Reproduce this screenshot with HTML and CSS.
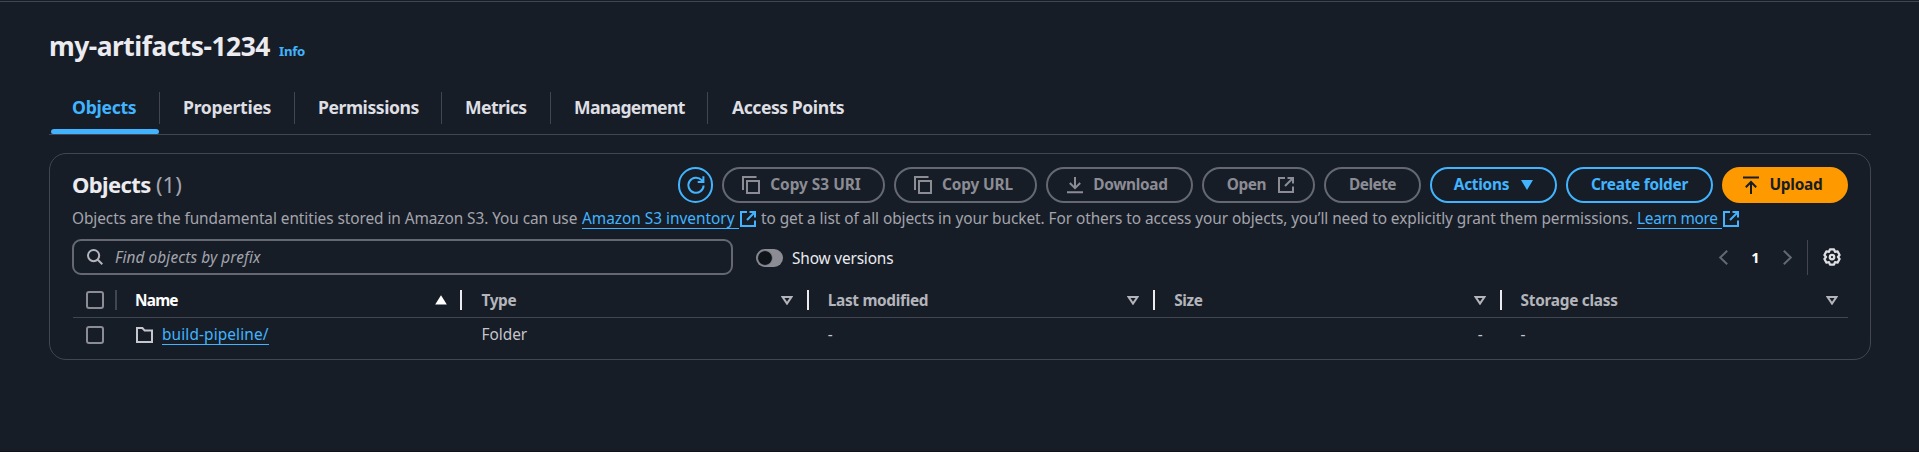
FILE: index.html
```
<!DOCTYPE html>
<html lang="en">
<head>
<meta charset="utf-8">
<title>my-artifacts-1234</title>
<link rel="stylesheet" href="styles.css">
</head>
<body>
<svg width="0" height="0" class="defs">
  <symbol id="copy" viewBox="0 0 18 18"><path d="M1 14V1H14.5M5 5H17V17H5Z"/></symbol>
  <symbol id="external" viewBox="0 0 16 16"><path d="M7 1H1v14h14V9.5M9.5 1H15v5.5M15 1L7 9"/></symbol>
  <symbol id="sort" viewBox="0 0 12 9"><path d="M1.6 1h8.8L6 7.6z"/></symbol>
</svg>
<main class="page">
  <header class="title-row"><h1>my-artifacts-1234</h1><a class="info">Info</a></header>
  <nav class="tabs">
    <a class="tab active t1">Objects</a><a class="tab t2">Properties</a><a class="tab t3">Permissions</a><a class="tab t4">Metrics</a><a class="tab t5">Management</a><a class="tab t6">Access Points</a>
  </nav>
  <section class="card">
    <div class="card-head">
      <h2>Objects</h2><span class="count">(1)</span>
      <div class="buttons">
        <button class="btn refresh"><svg class="icon" viewBox="0 0 18 18"><path d="M16.6 9.5A7.6 7.6 0 1 1 14.7 4.2L16 5.6M16.4 .3V6H10.7"/></svg></button>
        <button class="btn off lead copy-uri"><svg class="icon copy"><use href="#copy"/></svg><span>Copy S3 URI</span></button>
        <button class="btn off lead copy-url"><svg class="icon copy"><use href="#copy"/></svg><span>Copy URL</span></button>
        <button class="btn off lead download"><svg class="icon" viewBox="0 0 16 18"><path d="M8 1v11M2.8 7L8 12.2 13.2 7M0 16.2h16"/></svg><span>Download</span></button>
        <button class="btn off open"><span>Open</span><svg class="icon"><use href="#external"/></svg></button>
        <button class="btn off delete"><span>Delete</span></button>
        <button class="btn actions"><span>Actions</span><svg class="caret" viewBox="0 0 12 10"><path d="M0 0h12L6 10z"/></svg></button>
        <button class="btn create"><span>Create folder</span></button>
        <button class="btn primary lead upload"><svg class="icon" viewBox="0 0 16 18"><path d="M0 1.5h16M8 18V6M2.8 11.2L8 6l5.2 5.2"/></svg><span>Upload</span></button>
      </div>
    </div>
    <p class="desc"><span class="d1">Objects are the fundamental entities stored in Amazon S3. You can use</span><a class="link inv">Amazon S3 inventory</a><svg class="icon ext"><use href="#external"/></svg><span class="d2">to get a list of all objects in your bucket. For others to access your objects, you’ll need to explicitly grant them permissions.</span><a class="link learn">Learn more</a><svg class="icon ext"><use href="#external"/></svg></p>
    <div class="tools">
      <div class="search"><svg class="icon" viewBox="0 0 16 16"><circle cx="6.6" cy="6.6" r="5.6"/><path d="M10.5 10.5L15.3 15.3"/></svg><span>Find objects by prefix</span></div>
      <span class="toggle"></span><span class="toggle-label">Show versions</span>
      <div class="pager">
        <svg class="chev" viewBox="0 0 9 15"><path d="M8.2 .8L1.2 7.5l7 6.7"/></svg><b>1</b><svg class="chev" viewBox="0 0 9 15"><path d="M.8 .8l7 6.7-7 6.7"/></svg>
        <i></i>
        <svg class="gear" viewBox="0 0 16 16"><path d="M6.2 1.2H9.8L10.65 3.4 12.95 3.05 14.75 6.2 13.3 8 14.75 9.8 12.95 12.95 10.65 12.6 9.8 14.8H6.2L5.35 12.6 3.05 12.95 1.25 9.8 2.7 8 1.25 6.2 3.05 3.05 5.35 3.4Z"/><circle cx="8" cy="8" r="2"/></svg>
      </div>
    </div>
    <div class="row head">
      <div class="check-cell"><span class="check"></span></div>
      <div class="cell name sorted"><span>Name</span><svg class="tri up" viewBox="0 0 12 10"><path d="M6 .3L11.8 9.6H.2z"/></svg></div>
      <div class="cell"><span>Type</span><svg class="tri"><use href="#sort"/></svg></div>
      <div class="cell"><span>Last modified</span><svg class="tri"><use href="#sort"/></svg></div>
      <div class="cell"><span>Size</span><svg class="tri"><use href="#sort"/></svg></div>
      <div class="cell"><span class="storage">Storage class</span><svg class="tri"><use href="#sort"/></svg></div>
    </div>
    <div class="row body">
      <div class="check-cell"><span class="check"></span></div>
      <div class="cell"><svg class="folder" viewBox="0 0 17 16"><path d="M1 15V1h5.4l2.3 2.6H16V15z"/></svg><a class="link obj">build-pipeline/</a></div>
      <div class="cell">Folder</div>
      <div class="cell">-</div>
      <div class="cell size">-</div>
      <div class="cell">-</div>
    </div>
  </section>
</main>
</body>
</html>
```
FILE: styles.css
```
* { box-sizing: border-box; }
body { margin: 0; background: #161d26; color: #c6c6cd; font: 15.4px/22px "Noto Sans", "Open Sans", sans-serif; overflow: hidden; }
h1, h2, p { margin: 0; }
svg { fill: none; stroke: currentColor; stroke-width: 2; flex: none; display: block; overflow: visible; }
.defs { position: absolute; }
.page { height: 452px; padding: 27px 48px 0 49px; border-bottom: 1px solid #0f141a; background: linear-gradient(#424650, #424650) 0 1px / 100% 1px no-repeat; }
.title-row { display: flex; align-items: baseline; height: 65px; padding-top: 3px; }
h1 { width: 230px; font-size: 26.4px; line-height: 33px; letter-spacing: -.5px; color: #ebebf0; white-space: nowrap; }
.info { font-size: 13.2px; font-weight: 700; letter-spacing: -.25px; color: #42b4ff; }
.tabs { display: flex; height: 43px; border-bottom: 1px solid #424650; color: #dedee3; font-size: 17.6px; font-weight: 700; }
.tab { height: 32px; padding-left: 23px; line-height: 31px; border-right: 1px solid #424650; white-space: nowrap; }
.tab.active { height: 43px; color: #42b4ff; border: 0; background: linear-gradient(#424650, #424650) 110px 0 / 1px 32px no-repeat; }
.tab.active::after { content: ""; display: block; width: 108px; height: 5px; margin: 6px 0 0 -21px; border-radius: 3px 3px 2px 2px; background: #42b4ff; }
.t1 { width: 111px; letter-spacing: -.28px; }
.t2 { width: 135px; letter-spacing: -.3px; }
.t3 { width: 147px; letter-spacing: -.46px; }
.t4 { width: 109px; letter-spacing: -.6px; }
.t5 { width: 157px; letter-spacing: -.68px; }
.tab.t6 { padding-left: 24px; letter-spacing: -.46px; border: 0; }
.card { height: 207px; margin-top: 18px; padding: 13px 22px 0 22px; border: 1px solid #424650; border-radius: 17px; }
.card-head { display: flex; height: 36px; line-height: 35px; }
h2 { width: 84px; font-size: 22px; letter-spacing: -.6px; color: #ebebf0; }
.count { font-size: 22px; letter-spacing: 0; color: #a4a4ad; }
.buttons { display: flex; gap: 9px; margin-left: auto; }
.btn { display: flex; align-items: center; justify-content: center; gap: 10px; height: 36px; padding: 0; border: 2px solid #42b4ff; border-radius: 18px; background: none; color: #42b4ff; font: 700 15.4px/22px "Noto Sans", "Open Sans", sans-serif; white-space: nowrap; }
.btn .icon { width: 16px; height: 18px; }
.btn .icon.copy { width: 18px; height: 18px; }
.btn.lead { padding-right: 4px; }
.off { border-color: #656871; color: #8c8c94; }
.refresh { width: 35px; }
.refresh .icon { width: 18px; height: 18px; }
.copy-uri { width: 163px; }
.copy-url { width: 143px; letter-spacing: -.12px; }
.download { width: 147px; letter-spacing: -.32px; }
.btn.open { width: 113px; gap: 12px; padding-left: 4px; letter-spacing: -.45px; }
.delete { width: 97px; letter-spacing: -.5px; }
.actions { width: 127px; gap: 12px; letter-spacing: -.25px; }
.create { width: 147px; letter-spacing: -.27px; }
.upload { width: 126px; letter-spacing: -.24px; }
.primary { border-color: #ff9900; background: #ff9900; color: #161d26; }
.caret { width: 12px; height: 10px; fill: currentColor; stroke: none; }
.desc { display: flex; height: 22px; margin-top: 4px; line-height: 24px; color: #a4a4ad; white-space: nowrap; }
.icon { width: 16px; height: 16px; }
.link { height: 22px; color: #42b4ff; border-bottom: 1px solid #42b4ff; }
.d1 { width: 510px; letter-spacing: -.07px; }
.inv { width: 157px; letter-spacing: -.01px; }
.ext { margin: 4px 5px 0 1px; width: 16px; height: 16px; color: #42b4ff; }
.d2 { width: 876px; letter-spacing: -.065px; }
.learn { width: 85px; letter-spacing: -.3px; }
.tools { display: flex; align-items: center; height: 36px; margin-top: 10px; }
.search { display: flex; align-items: center; width: 661px; height: 36px; padding-left: 13px; gap: 12px; border: 2px solid #656871; border-radius: 9px; color: #a4a4ad; font-style: italic; letter-spacing: .09px; }
.search span { padding-top: 2px; }
.search .icon { color: #b4b4bb; }
.toggle { width: 27px; height: 18px; margin: 2px 9px 0 23px; border-radius: 9px; background: radial-gradient(circle at 9px 9px, #0f141a 6.4px, #70707a 7.2px, #8c8c94 8px); }
.toggle-label { padding-top: 3px; color: #ebebf0; letter-spacing: -.16px; }
.pager { display: flex; align-items: center; height: 36px; margin-left: auto; padding-right: 7px; color: #656871; }
.pager b { width: 55px; margin-bottom: 1px; text-align: center; color: #fff; font-size: 14.6px; }
.pager i { width: 1px; height: 35px; margin: 0 15px; background: #424650; }
.chev { width: 9px; height: 15px; }
.gear { width: 18px; height: 18px; color: #dedee3; stroke-linejoin: round; }
.row { display: grid; grid-template-columns: 43px repeat(5, 1fr); width: 1775px; margin-left: 1px; }
.head { height: 37px; margin-top: 6px; padding-top: 2px; border-bottom: 1px solid #424650; font-weight: 700; color: #b4b4bb; letter-spacing: -.33px; }
.head .cell span { padding-top: 2px; }
.body { height: 35px; line-height: 20px; }
.body .cell { padding-bottom: 1px; }
.body .check-cell { padding-bottom: 1px; }
.check-cell, .cell { display: flex; align-items: center; }
.check-cell { padding-left: 13px; }
.check { width: 18px; height: 18px; border: 2px solid #8c8c94; border-radius: 3px; }
.cell { padding-left: 19px; }
.head .cell { justify-content: space-between; margin-left: -2px; padding: 0 16px 0 21px; background: linear-gradient(#ebebf0, #ebebf0) 0 50% / 2px 20px no-repeat; }
.head .cell:last-child { padding-right: 10px; }
.head .cell.name { margin-left: -1px; padding: 0 15px 0 20px; background-image: linear-gradient(#424650, #424650); color: #fff; letter-spacing: -.8px; }
.tri { width: 12px; height: 9px; }
.tri.up { height: 10px; fill: currentColor; stroke: none; }
.head .storage { letter-spacing: -.28px; }
.folder { width: 17px; height: 16px; margin: 0 9px 0 1px; }
.obj { height: 20px; line-height: 20px; letter-spacing: .12px; }
.size { justify-content: flex-end; padding-right: 19px; }
```
